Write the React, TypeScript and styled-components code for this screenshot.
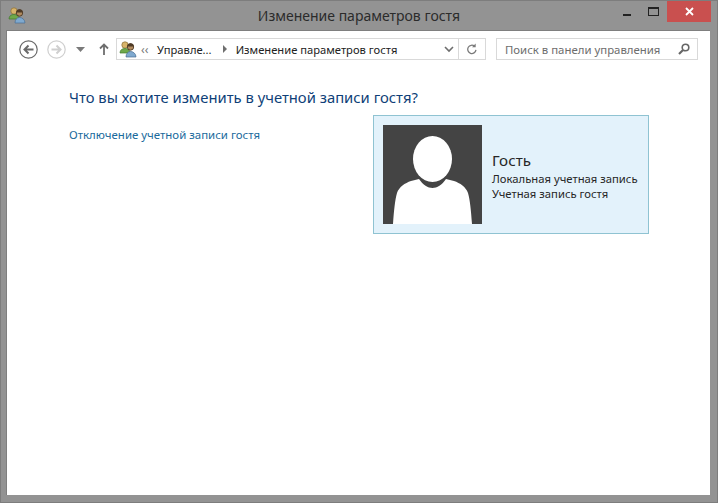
import React from "react";
import styled, { createGlobalStyle } from "styled-components";

const GlobalStyle = createGlobalStyle`
  html, body {
    margin: 0;
    padding: 0;
    background: #939393;
  }
  * {
    box-sizing: border-box;
  }
`;

const Frame = styled.div`
  width: 718px;
  height: 503px;
  background: #939393;
  border: 1px solid #7d7d7d;
  display: flex;
  flex-direction: column;
  font-family: "Noto Sans", "Open Sans", sans-serif;
  overflow: hidden;
`;

const TitleBar = styled.div`
  height: 29px;
  flex: none;
  display: grid;
  grid-template-columns: 110px 1fr 110px;
  align-items: start;
`;

const TitleIcon = styled.div`
  padding: 5px 0 0 7px;
`;

const TitleText = styled.div`
  text-align: center;
  font-size: 14px;
  line-height: 29px;
  color: #2b2b2b;
  white-space: nowrap;
`;

const WindowButtons = styled.div`
  display: flex;
  justify-content: flex-end;
  align-items: flex-start;
  margin-top: -1px;
  padding-right: 6px;
`;

const CaptionButton = styled.div<{ $width: number; $close?: boolean }>`
  width: ${(p) => p.$width}px;
  height: 22px;
  display: flex;
  align-items: center;
  justify-content: center;
  background: ${(p) => (p.$close ? "#c9504f" : "transparent")};
`;

const Client = styled.div`
  flex: 1;
  margin: 0 7px 7px 5px;
  background: #fff;
  border: 1px solid #7f7f7f;
  border-width: 1px 0 0 1px;
  display: flex;
  flex-direction: column;
`;

const Toolbar = styled.div`
  height: 38px;
  flex: none;
  display: flex;
  align-items: center;
  padding: 0 11px 2px 10px;
`;

const NavButtons = styled.div`
  display: flex;
  align-items: center;
  width: 99px;
  flex: none;
`;

const NavSlot = styled.div<{ $width: number; $inset?: number }>`
  width: ${(p) => p.$width}px;
  padding-left: ${(p) => p.$inset ?? 0}px;
  display: flex;
  justify-content: center;
  align-items: center;
`;

const AddressBar = styled.div`
  width: 370px;
  height: 22px;
  flex: none;
  border: 1px solid #d9d9d9;
  display: flex;
  align-items: center;
  font-size: 11.2px;
  color: #222;
  white-space: nowrap;
`;

const AddressIcon = styled.div`
  width: 24px;
  padding-left: 2px;
  display: flex;
  align-items: center;
`;

const Crumbs = styled.div`
  flex: 1;
  display: flex;
  align-items: center;
`;

const Chevrons = styled.span`
  color: #777;
  font-size: 12px;
  width: 16px;
`;

const CrumbText = styled.span`
  margin-right: 11px;
`;

const CrumbArrow = styled.span`
  width: 0;
  height: 0;
  border-left: 4px solid #6f6f6f;
  border-top: 4px solid transparent;
  border-bottom: 4px solid transparent;
  margin-right: 9px;
`;

const AddressAction = styled.div<{ $divided?: boolean }>`
  width: ${(p) => (p.$divided ? 27 : 18)}px;
  height: 100%;
  display: flex;
  align-items: center;
  justify-content: center;
  border-left: ${(p) => (p.$divided ? "1px solid #d9d9d9" : "none")};
`;

const SearchBox = styled.div`
  width: 202px;
  height: 22px;
  flex: none;
  margin-left: 10px;
  border: 1px solid #d9d9d9;
  display: flex;
  align-items: center;
  justify-content: space-between;
  padding: 0 7px 0 8px;
  font-size: 11.4px;
  color: #6d6d6d;
  white-space: nowrap;
`;

const Content = styled.div`
  display: grid;
  grid-template-columns: 304px 276px;
  padding: 18px 0 0 62px;
`;

const Heading = styled.h1`
  grid-column: 1 / 3;
  margin: 0 0 8px;
  font-size: 14.8px;
  line-height: 20px;
  font-weight: 400;
  color: #0f3f78;
  white-space: nowrap;
`;

const DisableLink = styled.a`
  margin-top: 11px;
  font-size: 11.45px;
  line-height: 17px;
  color: #1a6a9c;
  white-space: nowrap;
`;

const AccountCard = styled.div`
  height: 119px;
  background: #e3f2fb;
  border: 1px solid #8fc3d2;
  padding: 9px;
  display: flex;
  align-items: center;
  gap: 10px;
`;

const Avatar = styled.div`
  width: 99px;
  height: 99px;
  flex: none;
  background: #444;
  overflow: hidden;
`;

const AccountInfo = styled.div`
  display: flex;
  flex-direction: column;
  color: #262626;
  white-space: nowrap;
  padding-top: 2px;
`;

const AccountName = styled.div`
  font-size: 15.2px;
  line-height: 19px;
  margin-bottom: 1px;
`;

const AccountLine = styled.div`
  font-size: 11.27px;
  line-height: 15px;
`;

const UsersIcon = () => (
  <svg width="19" height="18" viewBox="0 0 19 18">
    <circle cx="6" cy="5" r="3.2" fill="#d8b46a" stroke="#8a6d35" strokeWidth="0.7" />
    <path d="M1 13c0-3 2-4.500 5-4.500S11 10 11 13z" fill="#6fa84a" stroke="#3f7a2c" strokeWidth="0.7" />
    <circle cx="11.5" cy="7" r="3.2" fill="#b08a5e" stroke="#4e3a26" strokeWidth="0.9" />
    <path d="M8.300 6.500a3.200 3.200 0 0 1 6.400 0z" fill="#4e3a26" />
    <path d="M7 17c0-3.500 2-5.500 4.500-5.500S17 13.500 17 17z" fill="#7fa9cf" stroke="#4a6f92" strokeWidth="0.7" />
  </svg>
);

const CircleArrowIcon = ({ flip, color }: { flip?: boolean; color: string }) => (
  <svg width="19" height="19" viewBox="0 0 19 19">
    <circle cx="9.500" cy="9.500" r="8.700" fill="none" stroke={color} strokeWidth="1.200" />
    <g transform={flip ? "rotate(180 9.500 9.500)" : undefined}>
      <path d="M14.500 9.500H6M9.500 5.500l-4 4 4 4" fill="none" stroke={color} strokeWidth="2" />
    </g>
  </svg>
);

const App = () => {
  return (
    <>
      <GlobalStyle />
      <Frame>
        <TitleBar>
          <TitleIcon>
            <UsersIcon />
          </TitleIcon>
          <TitleText>Изменение параметров гостя</TitleText>
          <WindowButtons>
            <CaptionButton $width={27}>
              <svg width="10" height="10" viewBox="0 0 10 10">
                <rect x="1" y="8" width="8" height="2" fill="#222" />
              </svg>
            </CaptionButton>
            <CaptionButton $width={27}>
              <svg width="11" height="9" viewBox="0 0 11 9">
                <rect x="0.500" y="0.500" width="10" height="8" fill="none" stroke="#222" />
                <rect x="0" y="0" width="11" height="2" fill="#222" />
              </svg>
            </CaptionButton>
            <CaptionButton $width={44} $close>
              <svg width="9" height="9" viewBox="0 0 9 9">
                <path d="M1 1l7 7M8 1l-7 7" stroke="#fff" strokeWidth="1.800" />
              </svg>
            </CaptionButton>
          </WindowButtons>
        </TitleBar>
        <Client>
          <Toolbar>
            <NavButtons>
              <NavSlot $width={22}>
                <CircleArrowIcon color="#6a6a6a" />
              </NavSlot>
              <NavSlot $width={34}>
                <CircleArrowIcon flip color="#cfcfcf" />
              </NavSlot>
              <NavSlot $width={14}>
                <svg width="9" height="5" viewBox="0 0 9 5">
                  <path d="M0 0h9L4.500 5z" fill="#7a7a7a" />
                </svg>
              </NavSlot>
              <NavSlot $width={28} $inset={5}>
                <svg width="10" height="12" viewBox="0 0 10 12">
                  <path d="M5 12V1.500M1 5.500L5 1.500l4 4" fill="none" stroke="#6e6e6e" strokeWidth="1.800" />
                </svg>
              </NavSlot>
            </NavButtons>
            <AddressBar>
              <AddressIcon>
                <UsersIcon />
              </AddressIcon>
              <Crumbs>
                <Chevrons>‹‹</Chevrons>
                <CrumbText>Управле...</CrumbText>
                <CrumbArrow />
                <span>Изменение параметров гостя</span>
              </Crumbs>
              <AddressAction>
                <svg width="10" height="7" viewBox="0 0 10 7">
                  <path d="M1 1l4 4 4-4" fill="none" stroke="#6e6e6e" strokeWidth="1.600" />
                </svg>
              </AddressAction>
              <AddressAction $divided>
                <svg width="12" height="12" viewBox="0 0 13 13">
                  <path d="M10.800 7.500a4.500 4.500 0 1 1-1.500-4" fill="none" stroke="#7a7a7a" strokeWidth="1.400" />
                  <path d="M10.500 0.500v4h-4z" fill="#7a7a7a" />
                </svg>
              </AddressAction>
            </AddressBar>
            <SearchBox>
              <span>Поиск в панели управления</span>
              <svg width="12" height="12" viewBox="0 0 12 12">
                <circle cx="7.500" cy="4.500" r="3.300" fill="none" stroke="#666" strokeWidth="1.600" />
                <path d="M5 7l-4 4" stroke="#666" strokeWidth="2.200" />
              </svg>
            </SearchBox>
          </Toolbar>
          <Content>
            <Heading>Что вы хотите изменить в учетной записи гостя?</Heading>
            <DisableLink>Отключение учетной записи гостя</DisableLink>
            <AccountCard>
              <Avatar>
                <svg width="99" height="99" viewBox="0 0 99 99">
                  <ellipse cx="49.500" cy="34" rx="19.500" ry="23" fill="#fff" />
                  <path
                    d="M10 99C11 85 12 75 14 68C16 62 22 58 28 56L36 54C40 60 45 63 49.500 63S59 60 63 54L71 56C77 58 83 62 85 68C87 75 88 85 89 99z"
                    fill="#fff"
                  />
                </svg>
              </Avatar>
              <AccountInfo>
                <AccountName>Гость</AccountName>
                <AccountLine>Локальная учетная запись</AccountLine>
                <AccountLine>Учетная запись гостя</AccountLine>
              </AccountInfo>
            </AccountCard>
          </Content>
        </Client>
      </Frame>
    </>
  );
};

export default App;
